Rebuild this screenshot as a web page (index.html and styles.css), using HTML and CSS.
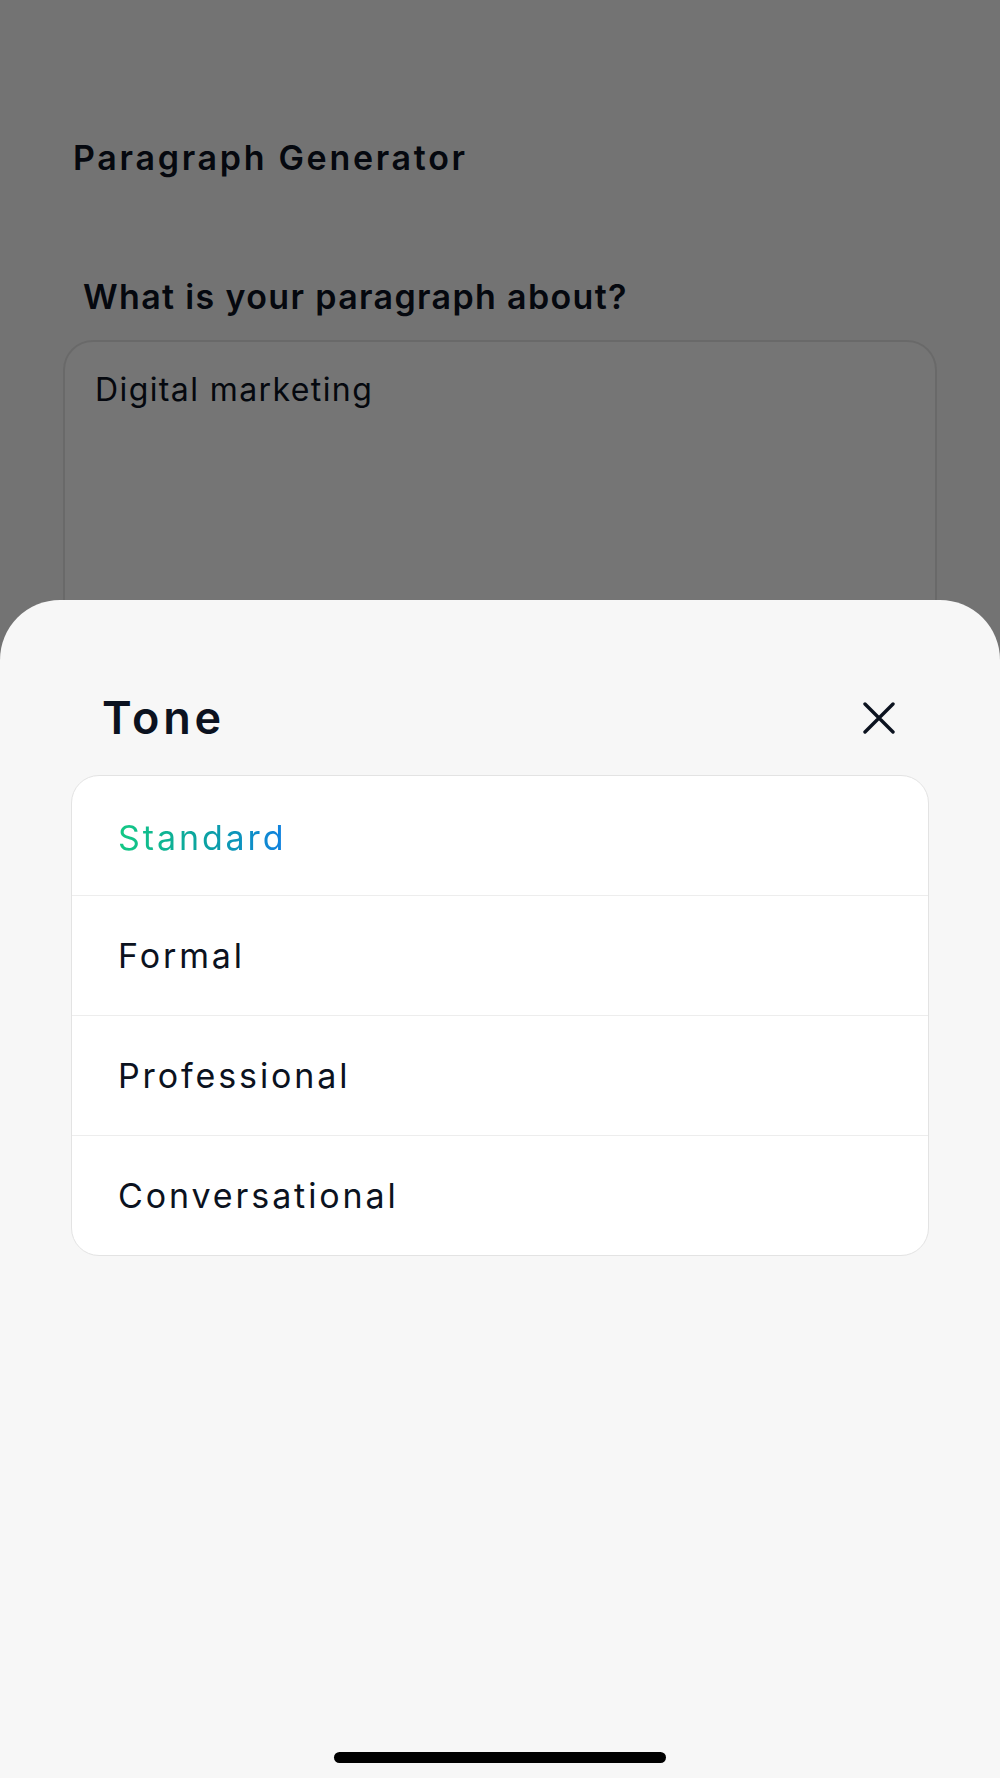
FILE: index.html
```html
<!DOCTYPE html>
<html lang="en">
<head>
<meta charset="utf-8">
<title>Paragraph Generator – Tone</title>
<link rel="stylesheet" href="styles.css">
</head>
<body>
  <main class="page">
    <h1 class="page-title">Paragraph Generator</h1>
    <label class="field-label" for="topic">What is your paragraph about?</label>
    <div class="textarea" id="topic">Digital marketing</div>
  </main>

  <div class="scrim"></div>

  <section class="sheet">
    <header class="sheet-head">
      <h2 class="sheet-title">Tone</h2>
      <button class="close" aria-label="Close">
        <svg width="32" height="32" viewBox="0 0 32 32" fill="none">
          <path d="M2 2 L30 30 M30 2 L2 30" stroke="#0c1320" stroke-width="3.4" stroke-linecap="round"/>
        </svg>
      </button>
    </header>
    <ul class="options">
      <li class="option selected"><span class="grad">Standard</span></li>
      <li class="option">Formal</li>
      <li class="option">Professional</li>
      <li class="option">Conversational</li>
    </ul>
    <div class="home-bar"></div>
  </section>
</body>
</html>
```

FILE: styles.css
```css
* { box-sizing: border-box; }

html, body {
  margin: 0;
  padding: 0;
}

body {
  width: 1000px;
  height: 1778px;
  overflow: hidden;
  position: relative;
  background: #f7f7f7;
  font-family: Inter, "Noto Sans", sans-serif;
  color: #0b1220;
}

.page {
  padding: 138px 63px 0 63px;
  display: flex;
  flex-direction: column;
}

.page-title {
  margin: 0 0 0 10px;
  font-size: 34px;
  line-height: 40px;
  font-weight: 600;
  letter-spacing: 2.7px;
}

.field-label {
  margin: 99px 0 0 20px;
  font-size: 34px;
  line-height: 40px;
  font-weight: 600;
  letter-spacing: 1.35px;
}

.textarea {
  margin-top: 23px;
  height: 330px;
  border: 2px solid #e2e2e2;
  border-radius: 30px;
  background: #fafafa;
  padding: 28px 30px;
  font-size: 32px;
  line-height: 40px;
  font-weight: 400;
  letter-spacing: 1.4px;
}

.scrim {
  position: absolute;
  inset: 0;
  background: rgba(0, 0, 0, 0.535);
}

.sheet {
  position: absolute;
  top: 600px;
  left: 0;
  right: 0;
  bottom: 0;
  background: #f7f7f7;
  border-radius: 60px 60px 0 0;
  display: flex;
  flex-direction: column;
  padding-top: 91px;
}

.sheet-head {
  display: flex;
  align-items: center;
  justify-content: space-between;
  padding: 0 105px 0 102px;
}

.sheet-title {
  margin: 0;
  font-size: 45px;
  line-height: 54px;
  font-weight: 600;
  letter-spacing: 3.8px;
}

.close {
  border: 0;
  background: none;
  padding: 0;
  width: 32px;
  height: 32px;
  display: block;
}
.close svg { display: block; }

.options {
  list-style: none;
  margin: 30px 71px 0 71px;
  padding: 0;
  background: #ffffff;
  border: 1px solid #e3e3e3;
  border-radius: 28px;
  overflow: hidden;
}

.option {
  height: 120px;
  display: flex;
  align-items: center;
  padding-left: 46px;
  font-size: 34px;
  line-height: 40px;
  font-weight: 400;
  letter-spacing: 2.9px;
  border-bottom: 1px solid #ededed;
}
.option:first-child { padding-top: 4px; }
.option:last-child { border-bottom: 0; height: 119px; }

.grad {
  background: linear-gradient(90deg, #14c984 0%, #0ba3a0 50%, #1080e2 100%);
  -webkit-background-clip: text;
  background-clip: text;
  color: transparent;
}

.home-bar {
  margin: auto auto 15px auto;
  width: 332px;
  height: 11px;
  border-radius: 6px;
  background: #000;
}
```
